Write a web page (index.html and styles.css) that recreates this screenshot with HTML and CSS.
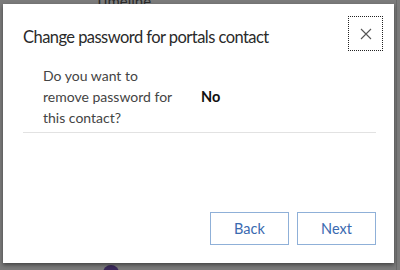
FILE: index.html
```html
<!DOCTYPE html>
<html lang="en">
<head>
    <meta charset="UTF-8">
    <meta name="viewport" content="width=device-width, initial-scale=1.0">
    <title>Change password</title>
    <link rel="stylesheet" href="styles.css">
</head>
<body>

    <!-- page behind the overlay -->
    <div class="backdrop">
        <span class="tab-title">Timeline</span>
        <span class="avatar"></span>
        <span class="edge-line"></span>
    </div>

    <div class="dialog">
        <div class="dialog-header">
            <h1 class="dialog-title">Change password for portals contact</h1>
            <button class="close" aria-label="Close">
                <svg width="12" height="12" viewBox="0 0 12 12">
                    <path d="M1 1 L11 11 M11 1 L1 11" stroke="#555" stroke-width="1.1" fill="none"/>
                </svg>
            </button>
        </div>

        <div class="field">
            <div class="field-label">Do you want to remove password for this contact?</div>
            <div class="field-value">No</div>
        </div>

        <div class="dialog-footer">
            <button class="btn">Back</button>
            <button class="btn">Next</button>
        </div>
    </div>

</body>
</html>
```

FILE: styles.css
```css
body, html {
    width: 100%;
    height: 100%;
    margin: 0;
}
body{
    background: #7b7b7b;
    font-family: Lato, "Open Sans", sans-serif;
    overflow: hidden;
    position: relative;
}
.backdrop{
    position: absolute;
    inset: 0;
}
.tab-title{
    position: absolute;
    left: 95px;
    top: -8px;
    font-size: 15px;
    color: #2a2a2a;
}
.avatar{
    position: absolute;
    left: 103px;
    top: 265px;
    width: 16px;
    height: 16px;
    border-radius: 50%;
    background: #3b2a5a;
}
.edge-line{
    position: absolute;
    left: 396px;
    top: 0;
    width: 1px;
    height: 100%;
    background: #6a6a6a;
}
.dialog{
    position: relative;
    margin: 4px 0 0 3px;
    width: 391px;
    height: 259px;
    background: #fff;
    box-shadow: 0 2px 4px rgba(0, 0, 0, 0.45);
    padding: 0 18px 18px 20px;
    box-sizing: border-box;
    display: flex;
    flex-direction: column;
}
.dialog-header{
    display: flex;
    justify-content: space-between;
    align-items: flex-start;
    padding-top: 12px;
    margin-right: -7px;
}
.dialog-title{
    margin: 11px 0 0 0;
    font-size: 16.5px;
    letter-spacing: -0.55px;
    font-weight: normal;
    color: #2a2a2a;
}
.close{
    width: 35px;
    height: 35px;
    border: 1px dotted #222;
    background: #fff;
    padding: 0;
    display: flex;
    justify-content: center;
    align-items: center;
}
.field{
    display: flex;
    align-items: center;
    margin-top: 14px;
    padding: 0 0 4px 20px;
    border-bottom: 1px solid #e2e2e2;
}
.field-label{
    width: 135px;
    font-size: 14px;
    line-height: 21px;
    color: #444;
}
.field-value{
    margin-left: 23px;
    font-size: 14.5px;
    font-weight: bold;
    color: #111;
}
.dialog-footer{
    margin-top: auto;
    display: flex;
    justify-content: flex-end;
    gap: 8px;
}
.btn{
    width: 79px;
    height: 33px;
    border: 1px solid #8fb0d8;
    background: #fff;
    color: #3a6ab0;
    font-family: inherit;
    font-size: 14.5px;
}
```
